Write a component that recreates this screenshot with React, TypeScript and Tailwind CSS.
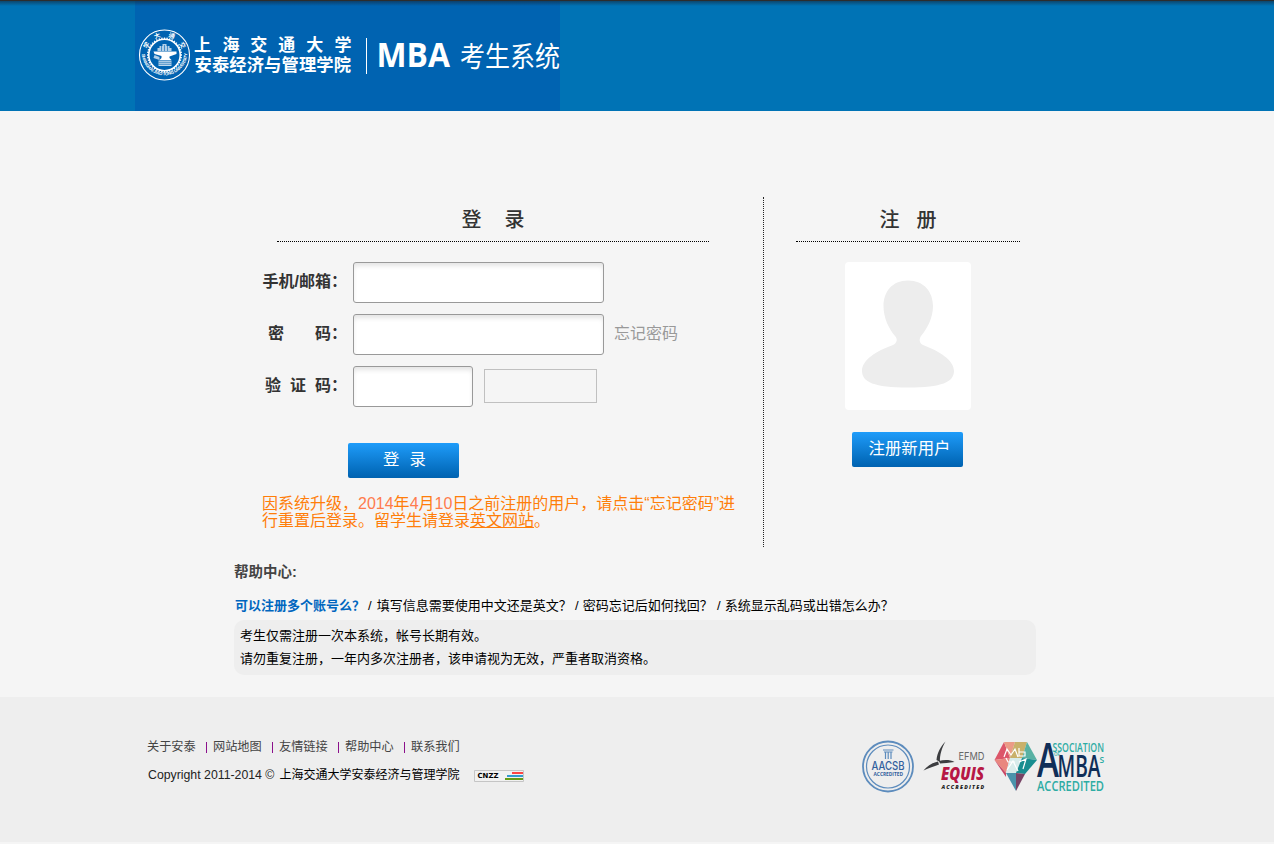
import React from "react";

const CN = "font-['Liberation_Sans','Noto_Sans_CJK_SC',sans-serif]";

function Seal() {
  const teeth = Array.from({ length: 40 }, (_, i) => i * 9);
  return (
    <g transform="translate(29.5 55)" fill="none" stroke="#fff">
      <circle r="25" strokeWidth="1.1" />
      <circle r="15.700" strokeWidth="1.500" />
      {teeth.map((a) => (
        <path key={a} d="M0 -17.5V-15.700" strokeWidth="1.3" transform={`rotate(${a})`} />
      ))}
      <g fill="#fff" stroke="none">
        <path d="M-7 -4v-3h2v-2h3v-2h4v2h3v2h2v3z" opacity=".7" />
        <path d="M-11 -3.5H12V-1L5 1.5V3L7 5H-5L-3 3V1L-10 -1z" />
        <path d="M-6 5.5H7V11H-6z" opacity=".75" />
        <path d="M-10 0L-5 2V5L-11 3z" opacity=".7" />
      </g>
      <path d="M-3 -9V-4M0 -10V-4M3 -9V-4M-6 7.300H7M-6 9.300H7" stroke="#0063b1" strokeWidth=".6" />
      <path id="sealBottom" d="M-22.8 -1A22.850 22.850 0 0 0 22.8 -1" stroke="none" />
      <g fill="#fff" stroke="none">
        <g fontSize="6.3" fontWeight="bold" textAnchor="middle" fontFamily="'Noto Sans CJK SC', sans-serif">
          <text y="-18.300" transform="rotate(-61)">学</text>
          <text y="-18.300" transform="rotate(-21)">大</text>
          <text y="-18.300" transform="rotate(21)">通</text>
          <text y="-18.300" transform="rotate(61)">交</text>
        </g>
        <text fontSize="4.4" fontWeight="bold" fontFamily="'Liberation Sans', sans-serif">
          <textPath href="#sealBottom" textLength="69">SHANGHAI JIAO TONG UNIVERSITY</textPath>
        </text>
      </g>
    </g>
  );
}

function Logo() {
  return (
    <svg width="425" height="111" viewBox="0 0 425 111" className="block shrink-0 bg-[#0063b1]">
      <Seal />
      <g fill="#fff" fontFamily="'Noto Sans CJK SC', sans-serif">
        <text x="59 87.4 115.2 143.2 171.2 199.4" y="51" fontSize="17" fontWeight="bold">上海交通大学</text>
        <text x="59.5" y="71" fontSize="17.3" fontWeight="bold" textLength="156.500">安泰经济与管理学院</text>
        <text x="241.500" y="67" fontSize="34" fontWeight="700" fontFamily="'Open Sans', sans-serif" textLength="73.500" lengthAdjust="spacingAndGlyphs">MBA</text>
        <text x="325" y="66.5" fontSize="28" textLength="100" lengthAdjust="spacingAndGlyphs">考生系统</text>
      </g>
      <path d="M231.5 38V74" stroke="#fff" />
    </svg>
  );
}

function Field({ label, last, className, children }: { label: string[]; last?: boolean; className: string; children?: React.ReactNode }) {
  return (
    <div className={last ? "flex h-[41px] items-center" : "mb-[11px] flex h-[41px] items-center"}>
      <label className="flex w-[119px] justify-end pr-[6px] pb-[1px] text-[16px] font-bold leading-none whitespace-nowrap text-[#333]">
        {label.map((part, i) => (
          <span key={i} className={i === 0 ? "" : label.length === 2 ? "ml-[31px]" : "ml-[9px]"}>{part}</span>
        ))}
      </label>
      <input className={`${className} h-[41px] rounded-[3px] border border-[#999] bg-white px-2 shadow-[inset_0_4px_5px_-1px_rgba(0,0,0,0.11)] outline-none`} />
      {children}
    </div>
  );
}

const buttonStyle = "flex h-[35px] w-[111px] justify-center rounded-[2px] bg-gradient-to-b from-[#1e9cfa] to-[#0062b0] text-[16.4px] leading-[33px] whitespace-pre text-white";

function Login() {
  return (
    <section className="h-[350px] w-[530px] border-r border-dotted border-[#222]">
      <h2 className="ml-[43px] flex h-[45px] w-[432px] justify-center gap-[23px] border-b border-dotted border-black text-[20px] leading-[47px] font-medium text-[#333]">
        <span>登</span><span>录</span>
      </h2>
      <form className="pt-[20px]" onSubmit={(e) => e.preventDefault()}>
        <Field label={["手机/邮箱："]} className="w-[251px]" />
        <Field label={["密", "码："]} className="w-[251px]">
          <a className="ml-[10px] pb-[1px] text-[16px] leading-none text-[#999]">忘记密码</a>
        </Field>
        <Field label={["验", "证", "码："]} className="w-[120px]" last>
          <span className="mb-[2px] ml-[11px] h-[34px] w-[113px] border border-[#c0c0c0]" />
        </Field>
        <button className={`${buttonStyle} mt-[36px] ml-[114px] gap-[10px]`}><span className="pl-[2px]">登</span><span>录</span></button>
      </form>
      <p className="mt-[17px] ml-[28px] text-[16px] leading-[17px] whitespace-nowrap text-[#ff7e0a]">
        因系统升级，<span className="text-[#ff7b4d]">2014</span>年<span className="text-[#ff7b4d]">4</span>月<span className="text-[#ff7b4d]">10</span>日之前注册的用户，请点击“忘记密码”进<br />
        行重置后登录。留学生请登录<a className="underline">英文网站</a>。
      </p>
    </section>
  );
}

function Register() {
  return (
    <section className="ml-[32px] flex w-[224px] flex-col items-center">
      <h2 className="flex h-[45px] w-full justify-center gap-[17px] border-b border-dotted border-black text-[20px] leading-[47px] font-medium text-[#333]">
        <span>注</span><span>册</span>
      </h2>
      <svg width="126" height="148" viewBox="0 0 126 148" className="mt-[20px] block rounded-[4px] bg-white">
        <path fill="#ededed" d="M63 18.5C79 18.5 88 30 88 44C88 56 82 67 76 74C74 77 74 81 78 83C94 89 109 98 109 109C109 120 97 125.500 63 125.500C29 125.500 17 120 17 109C17 98 31 89 48 83C52 81 53 77 50 74C44 67 38.500 56 38.500 44C38.500 30 47 18.500 63 18.500Z" />
      </svg>
      <button className={`${buttonStyle} mt-[22px] mr-[1px] pl-[4px]`}>注册新用户</button>
    </section>
  );
}

function Help() {
  return (
    <section className="w-[802px]">
      <h3 className="pt-[15px] text-[14.500px] leading-[20px] font-bold text-[#444]">帮助中心:</h3>
      <nav className="mt-[14px] flex h-[24px] text-[13px] leading-[20px] whitespace-nowrap text-black">
        <a className="w-[134px] pl-[1px] font-bold text-[#0066bf]">可以注册多个账号么？</a>
        <a className="w-[207px]"><span className="mr-[5px]">/</span>填写信息需要使用中文还是英文？</a>
        <a className="w-[142px]"><span className="mr-[4px]">/</span>密码忘记后如何找回？</a>
        <a><span className="mr-[4px]">/</span>系统显示乱码或出错怎么办？</a>
      </nav>
      <div className="h-[55px] rounded-[10px] bg-[#eee] px-[6px] pt-[4px] text-[13px] leading-[23px] text-black">
        <p>考生仅需注册一次本系统，帐号长期有效。</p>
        <p>请勿重复注册，一年内多次注册者，该申请视为无效，严重者取消资格。</p>
      </div>
    </section>
  );
}

function Accreditations() {
  return (
    <svg width="270" height="70" viewBox="0 0 270 70" className="block shrink-0" fontFamily="'Open Sans', sans-serif">
      <g fill="none" stroke="#5d8cbd">
        <circle cx="38" cy="36.500" r="25" strokeWidth="1.8" />
        <circle cx="38" cy="36.500" r="21.500" strokeWidth="1.2" />
        <path d="M33 20H43.500M34 22H42.500M35.500 22V29M38.200 22V29M41 22V29" strokeWidth="1.2" />
      </g>
      <g fill="#315f9d">
        <text x="21.500" y="39.500" fontSize="11.500" fontWeight="500" fontFamily="Inter, sans-serif" textLength="33" lengthAdjust="spacingAndGlyphs">AACSB</text>
        <text x="23.500" y="45.800" fontSize="5.500" fontWeight="bold" textLength="29.500" lengthAdjust="spacingAndGlyphs">ACCREDITED</text>
      </g>
      <g fill="#3c3d40">
        <path d="M95.500 11.500C91 16 87 23 86.500 30L90 32C89.500 25 92 17.500 95.500 11.500Z" />
        <path d="M88 31.500C83 32.500 77 36 73.500 40.500C80 37.500 85 36 89 34.500Z" />
        <path d="M89 31C94 29.500 100 29.500 104.500 32C99 32.500 94 33.500 90 33.500Z" />
      </g>
      <text x="108.500" y="30" fontSize="10.500" fill="#666" fontFamily="Inter, sans-serif" textLength="26" lengthAdjust="spacingAndGlyphs">EFMD</text>
      <text x="91" y="50" fontSize="17.500" fontWeight="800" fontStyle="italic" fill="#b71845" textLength="43" lengthAdjust="spacingAndGlyphs">EQUIS</text>
      <text x="91.500" y="59.300" fontSize="5.300" fontWeight="800" fontStyle="italic" fill="#222" textLength="42.500">ACCREDITED</text>
      <g>
        <path d="M154 12L144.500 30L160 28Z" fill="#dc5669" />
        <path d="M154 12L165 12L160 28Z" fill="#eb9b86" />
        <path d="M165 12H177L172 28H160Z" fill="#c9b16b" />
        <path d="M177 12L187 30L172 28Z" fill="#58b1a3" />
        <path d="M144.500 30L160 28L156 43Z" fill="#e9877f" />
        <path d="M160 28H172L166 43H156Z" fill="#d8eceb" />
        <path d="M172 28L187 30L175 44L166 43Z" fill="#188d90" />
        <path d="M144.500 30L156 43V47Z" fill="#c84665" />
        <path d="M156 43H166V61Z" fill="#4a93ab" />
        <path d="M166 43L175 44L166 61Z" fill="#774365" />
        <path d="M154 27L157 19L161 25L165 19L168 27M169 18V26H175V22H169M157 40L163 31L168 41M169 32L176 29L173 39M156 28L158 32H165" fill="none" stroke="#fff" strokeWidth="1.200" />
      </g>
      <g fill="#2daca4" fontWeight="600">
        <text x="202.500" y="21.500" fontSize="13" textLength="51.500" lengthAdjust="spacingAndGlyphs">SSOCIATION</text>
        <text x="187" y="61" fontSize="14" textLength="67" lengthAdjust="spacingAndGlyphs">ACCREDITED</text>
        <text x="204" y="26" fontSize="4.500">OF</text>
        <text x="249.500" y="32.500" fontSize="8.500">S</text>
      </g>
      <g fill="#102e58" fontWeight="600">
        <text x="187" y="47" fontSize="47" textLength="22" lengthAdjust="spacingAndGlyphs">A</text>
        <text x="207.500" y="47" fontSize="30" textLength="43" lengthAdjust="spacingAndGlyphs">MBA</text>
      </g>
    </svg>
  );
}

function Footer() {
  const links = ["关于安泰", "网站地图", "友情链接", "帮助中心", "联系我们"];
  return (
    <footer className="flex h-[145px] bg-[#eee] pl-[147px]">
      <div className="w-[703px] pt-[40px] text-[12.2px] whitespace-nowrap">
        <nav className="flex h-[20px] leading-[20px] text-[#444]">
          {links.map((link, i) => (
            <a key={link} className="flex w-[66px] items-center">
              {i > 0 && <i className="mr-[6px] -ml-[7px] h-[11px] w-px bg-[#8b108b]" />}
              {link}
            </a>
          ))}
        </nav>
        <div className="mt-[8px] flex h-[20px] items-center text-black">
          <span className="ml-[1px] w-[326px] text-[12px] leading-[20px]"><span className="mr-[5px] text-[12.300px] text-[#222]">Copyright 2011-2014 ©</span>上海交通大学安泰经济与管理学院</span>
          <svg width="50" height="12" viewBox="0 0 50 12" className="mt-[2px]">
            <path d="M.5 .5H49.500V11.500H.5Z" fill="#f1f1f1" stroke="#c5c5c5" />
            <path d="M38 3H49" stroke="#f44" strokeWidth="2" />
            <path d="M33 6H49" stroke="#329bd0" strokeWidth="2" />
            <path d="M31 9H49" stroke="#669b16" strokeWidth="2" />
            <text x="3.500" y="8.200" fontSize="7" fontWeight="bold" fontFamily="'DejaVu Sans', sans-serif" textLength="21" lengthAdjust="spacingAndGlyphs">CNZZ</text>
          </svg>
        </div>
      </div>
      <div className="pt-[33px]"><Accreditations /></div>
    </footer>
  );
}

export default function App() {
  return (
    <div className={`${CN} h-[844px] w-[1274px] overflow-hidden bg-[#f5f5f5]`}>
      <header className="relative h-[111px] bg-[#0073b5] pl-[135px]">
        <Logo />
        <div className="absolute inset-x-0 top-0 h-[6px] bg-[linear-gradient(to_bottom,#2c2c2c_0px,#2c2c2c_1px,rgba(20,40,60,.6)_1px,transparent_6px)]" />
      </header>
      <main className="h-[586px] pt-[86px] pl-[234px]">
        <div className="flex h-[350px]"><Login /><Register /></div>
        <Help />
      </main>
      <Footer />
    </div>
  );
}
